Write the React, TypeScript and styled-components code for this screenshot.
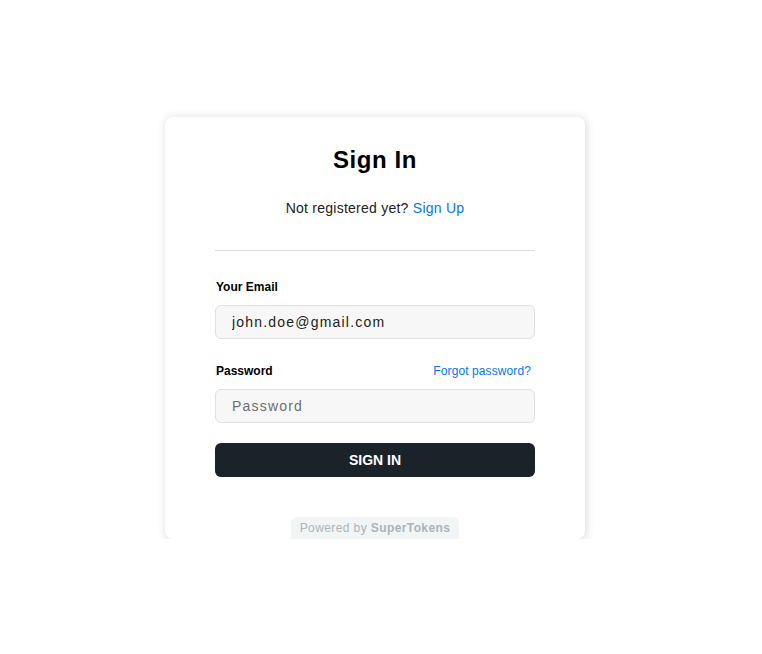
import React from 'react'
import styled, { createGlobalStyle } from 'styled-components'

const GlobalStyle = createGlobalStyle`
  html, body {
    margin: 0;
    padding: 0;
    background: #ffffff;
    font-family: "Liberation Sans", Arial, Helvetica, sans-serif;
  }
`

const Page = styled.div`
  display: flex;
  padding: 117px 0 0 165px;
`

const Card = styled.div`
  width: 420px;
  box-sizing: border-box;
  background: #ffffff;
  border-radius: 8px;
  box-shadow: 1px 1px 10px rgba(0, 0, 0, 0.16);
  padding: 23px 50px 0;
  display: flex;
  flex-direction: column;
  align-items: stretch;
`

const Title = styled.h1`
  margin: 0;
  font-size: 24px;
  line-height: 40px;
  font-weight: 700;
  letter-spacing: 0.58px;
  text-align: center;
  color: #000000;
`

const Subtitle = styled.div`
  margin-top: 18px;
  font-size: 14px;
  line-height: 21px;
  letter-spacing: 0.25px;
  text-align: center;
  color: #222222;
`

const TextLink = styled.a<{ $small?: boolean }>`
  color: #0076ff;
  text-decoration: none;
  cursor: pointer;
  font-size: ${({ $small }) => ($small ? '12px' : 'inherit')};
  letter-spacing: ${({ $small }) => ($small ? '0.1px' : 'inherit')};
  line-height: ${({ $small }) => ($small ? '18px' : 'inherit')};
`

const Divider = styled.hr`
  margin: 31px 0 0;
  border: none;
  border-top: 1px solid #dddddd;
  height: 0;
`

const Form = styled.form`
  display: flex;
  flex-direction: column;
  padding-top: 25px;
`

const Field = styled.div`
  display: flex;
  flex-direction: column;
  margin-bottom: 21px;
`

const LabelRow = styled.div`
  display: flex;
  justify-content: space-between;
  align-items: flex-end;
  height: 20px;
  margin-bottom: 9px;
  padding-right: 4px;
`

const Label = styled.label`
  font-size: 12px;
  font-weight: 700;
  line-height: 18px;
  color: #000000;
  padding-left: 1px;
`

const Input = styled.input`
  box-sizing: border-box;
  width: 100%;
  height: 34px;
  border: 1px solid #e0e0e0;
  border-radius: 6px;
  background: #f7f7f7;
  padding: 0 16px;
  font-family: "Liberation Sans", Arial, sans-serif;
  font-size: 14px;
  letter-spacing: 1.2px;
  color: #222222;
  outline: none;

  &::placeholder {
    color: #6e6e6e;
  }
`

const SubmitButton = styled.button`
  margin-top: -1px;
  height: 34px;
  border: none;
  border-radius: 6px;
  background: #1c222a;
  color: #ffffff;
  font-family: "Liberation Sans", Arial, sans-serif;
  font-size: 14px;
  font-weight: 700;
  letter-spacing: 0;
  cursor: pointer;
`

const Footer = styled.div`
  display: flex;
  justify-content: center;
  margin-top: 40px;
`

const Powered = styled.div`
  height: 22px;
  padding: 0 9px;
  border-radius: 6px 6px 0 0;
  background: #f2f5f6;
  color: #aab4b8;
  font-size: 12px;
  line-height: 22px;
  letter-spacing: 0.4px;

  b {
    font-weight: 700;
  }
`

const App = () => {
  return (
    <>
      <GlobalStyle />
      <Page>
        <Card>
          <Title>Sign In</Title>
          <Subtitle>
            Not registered yet? <TextLink>Sign Up</TextLink>
          </Subtitle>
          <Divider />
          <Form onSubmit={(e) => e.preventDefault()}>
            <Field>
              <LabelRow>
                <Label>Your Email</Label>
              </LabelRow>
              <Input type="email" defaultValue="john.doe@gmail.com" />
            </Field>
            <Field>
              <LabelRow>
                <Label>Password</Label>
                <TextLink $small>Forgot password?</TextLink>
              </LabelRow>
              <Input type="password" placeholder="Password" />
            </Field>
            <SubmitButton type="submit">SIGN IN</SubmitButton>
          </Form>
          <Footer>
            <Powered>
              Powered by <b>SuperTokens</b>
            </Powered>
          </Footer>
        </Card>
      </Page>
    </>
  )
}

export default App
